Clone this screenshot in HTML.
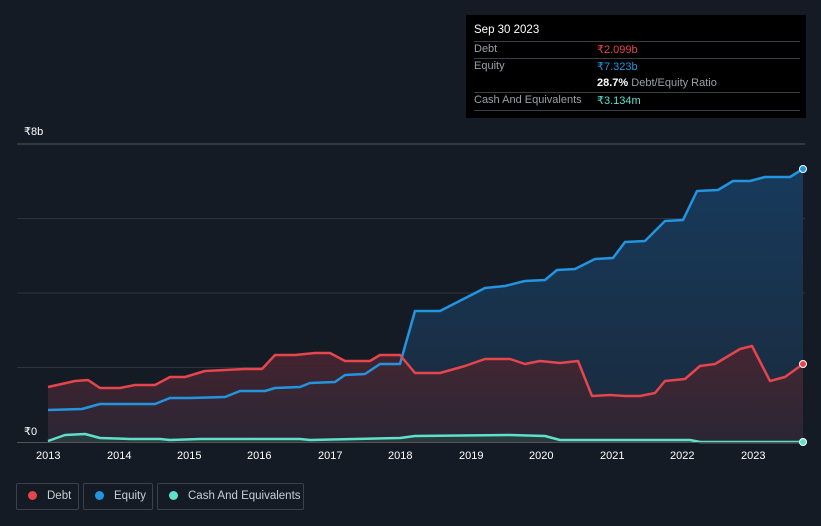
<!DOCTYPE html>
<html><head><style>
html,body{margin:0;width:821px;height:526px;overflow:hidden}
body{background:#151b24;font-family:"Liberation Sans",sans-serif;position:relative}
.tt{position:absolute;left:466px;top:15px;width:340px;height:103px;background:#000;font-size:11px;color:#9aa0a8}
.tt .r{position:absolute;left:8px;right:6px;border-top:1px solid #3a3e45}
.lg{position:absolute;top:483px;height:27px;border:1px solid #3b414b;border-radius:2px;color:#c9ced6;font-size:11.5px;line-height:25px;box-sizing:border-box;white-space:nowrap;overflow:hidden}
.dot{display:inline-block;width:9px;height:9px;border-radius:50%;margin:0 10px 0 11px;vertical-align:-1px}
.ax{position:absolute;top:450px;color:#fff;font-size:11px}
</style></head><body>
<svg width="821" height="526" style="position:absolute;left:0;top:0">
<defs>
<linearGradient id="eg" x1="0" y1="0" x2="0" y2="1"><stop offset="0" stop-color="#173a5c"/><stop offset="1" stop-color="#1a2a3c"/></linearGradient>
<linearGradient id="dg" x1="0" y1="0" x2="0" y2="1"><stop offset="0" stop-color="#4a2430"/><stop offset="1" stop-color="#2c2633"/></linearGradient>
</defs>
<g stroke="#2c3440" stroke-width="1"><line x1="17" y1="144" x2="805" y2="144" stroke="#555"/><line x1="17" y1="218.5" x2="805" y2="218.5"/><line x1="17" y1="293" x2="805" y2="293"/><line x1="17" y1="367.5" x2="805" y2="367.5"/></g>
<polygon fill="url(#eg)" points="48,410 82,409 100,404 155,404 170,398 190,398 225,397 240,391 265,391 275,388 300,387 310,383 335,382 345,375 365,374 380,364 400,364 415,311 440,311 485,288 505,286 525,281 545,280 557,270 575,269 595,259 613,258 625,242 645,241 665,221 683,220 697,191 718,190 733,181 750,181 765,177 790,177 803,169 803,442 48,442"/>
<polygon fill="url(#dg)" opacity="0.9" points="48,387 75,381 88,380 100,388 120,388 135,385 155,385 170,377 185,377 205,371 225,370 245,369 262,369 275,355 295,355 315,353 330,353 345,361 370,361 380,355 400,355 415,373 440,373 465,366 485,359 510,359 525,364 540,361 560,363 578,361 592,396 610,395 625,396 640,396 655,393 665,381 685,379 700,366 715,364 740,349 752,346 770,381 785,377 803,364 803,442 48,442"/>
<polyline fill="none" stroke="#2394e0" stroke-width="2.5" stroke-linejoin="round" points="48,410 82,409 100,404 155,404 170,398 190,398 225,397 240,391 265,391 275,388 300,387 310,383 335,382 345,375 365,374 380,364 400,364 415,311 440,311 485,288 505,286 525,281 545,280 557,270 575,269 595,259 613,258 625,242 645,241 665,221 683,220 697,191 718,190 733,181 750,181 765,177 790,177 803,169"/>
<polyline fill="none" stroke="#e5454c" stroke-width="2.5" stroke-linejoin="round" points="48,387 75,381 88,380 100,388 120,388 135,385 155,385 170,377 185,377 205,371 225,370 245,369 262,369 275,355 295,355 315,353 330,353 345,361 370,361 380,355 400,355 415,373 440,373 465,366 485,359 510,359 525,364 540,361 560,363 578,361 592,396 610,395 625,396 640,396 655,393 665,381 685,379 700,366 715,364 740,349 752,346 770,381 785,377 803,364"/>
<polygon fill="#2a4a4a" opacity="0.6" points="48,441 65,435 85,434 100,438 130,439 160,439 170,440 200,439 300,439 310,440 400,438 415,436 510,435 545,436 560,440 600,440 690,440 700,442 48,442"/>
<polyline fill="none" stroke="#5fe0cb" stroke-width="2.5" stroke-linejoin="round" points="48,441 65,435 85,434 100,438 130,439 160,439 170,440 200,439 300,439 310,440 400,438 415,436 510,435 545,436 560,440 600,440 690,440 700,442 803,442"/>
<line x1="17" y1="442.5" x2="805" y2="442.5" stroke="#555"/>
<circle cx="803" cy="169" r="3.5" fill="#2394e0" stroke="#fff" stroke-width="1"/>
<circle cx="803" cy="364" r="3.5" fill="#e5454c" stroke="#fff" stroke-width="1"/>
<circle cx="803" cy="442" r="3.5" fill="#5fe0cb" stroke="#fff" stroke-width="1"/>
</svg>
<div style="position:absolute;left:24px;top:125px;color:#fff;font-size:11px">₹8b</div>
<div style="position:absolute;left:24px;top:425px;color:#fff;font-size:11px">₹0</div>
<div class="ax" style="left:36px">2013</div><div class="ax" style="left:107px">2014</div><div class="ax" style="left:177px">2015</div><div class="ax" style="left:247px">2016</div><div class="ax" style="left:318px">2017</div><div class="ax" style="left:388px">2018</div><div class="ax" style="left:459px">2019</div><div class="ax" style="left:529px">2020</div><div class="ax" style="left:600px">2021</div><div class="ax" style="left:670px">2022</div><div class="ax" style="left:741px">2023</div>
<div class="tt">
<div style="position:absolute;left:8px;top:9px;color:#fff;font-size:11.5px">Sep 30 2023</div>
<div class="r" style="top:26px"></div>
<div style="position:absolute;left:8px;top:28px">Debt</div><div style="position:absolute;left:131px;top:28px;color:#e5454c">₹2.099b</div>
<div class="r" style="top:43px"></div>
<div style="position:absolute;left:8px;top:45px">Equity</div><div style="position:absolute;left:131px;top:45px;color:#2394e0">₹7.323b</div>
<div style="position:absolute;left:131px;top:62px"><b style="color:#fff">28.7%</b> Debt/Equity Ratio</div>
<div class="r" style="top:77px"></div>
<div style="position:absolute;left:8px;top:79px">Cash And Equivalents</div><div style="position:absolute;left:131px;top:79px;color:#5fe0cb">₹3.134m</div>
<div class="r" style="top:95px"></div>
</div>
<div class="lg" style="left:16px;width:63px"><span class="dot" style="background:#e5454c"></span>Debt</div>
<div class="lg" style="left:83px;width:70px"><span class="dot" style="background:#2394e0"></span>Equity</div>
<div class="lg" style="left:157px;width:147px"><span class="dot" style="background:#5fe0cb"></span>Cash And Equivalents</div>
</body></html>
